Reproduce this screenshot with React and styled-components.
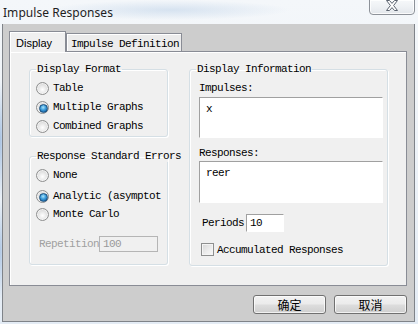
import React from 'react'
import styled, { createGlobalStyle } from 'styled-components'

const GlobalStyle = createGlobalStyle`
  html, body {
    margin: 0;
    padding: 0;
    background: #e9eff6;
  }
  * { box-sizing: border-box; }
`;

const MONO = `"Liberation Mono", "Courier New", monospace`;

const Window = styled.div`
  width: 418px;
  height: 324px;
  display: flex;
  flex-direction: column;
  overflow: hidden;
  background:
    radial-gradient(ellipse 120px 10px at 170px 10px, rgba(190, 210, 232, 0.55), transparent),
    radial-gradient(ellipse 6px 60px at 0 140px, rgba(120, 160, 210, 0.6), transparent),
    radial-gradient(ellipse 6px 50px at 0 250px, rgba(120, 160, 210, 0.5), transparent),
    linear-gradient(180deg, #f4f7fa 0%, #eef3f8 40%, #e4ecf5 100%);
`;

const TitleBar = styled.div`
  height: 24px;
  flex: none;
  display: flex;
  justify-content: space-between;
  align-items: flex-start;
`;

const Title = styled.div`
  padding: 5px 0 0 3px;
  font-family: "Noto Sans", "Open Sans", sans-serif;
  font-size: 12px;
  line-height: 15px;
  color: #1e1e1e;
  letter-spacing: 0.05px;
`;

const CloseButton = styled.div`
  width: 46px;
  height: 16px;
  margin: -1px 3px 0 0;
  border: 1px solid #8d9299;
  border-radius: 0 0 4px 4px;
  background: linear-gradient(180deg, #f6f8fa 0%, #eef1f4 50%, #e2e6eb 100%);
  box-shadow: inset 0 0 0 1px rgba(255, 255, 255, 0.8);
  display: flex;
  justify-content: center;
  align-items: flex-start;
`;

const Client = styled.div`
  flex: 1;
  margin: 0 3px 2px 2px;
  border: 1px solid #7f8389;
  border-top: none;
  background: #cdcdcd;
  padding: 7px 7px 0 6px;
  display: flex;
  flex-direction: column;
`;

const TabStrip = styled.div`
  display: flex;
  align-items: flex-end;
  height: 20px;
`;

const Tab = styled.div`
  position: relative;
  z-index: ${(p) => (p.$active ? 2 : 1)};
  width: ${(p) => p.$width}px;
  height: ${(p) => (p.$active ? 21 : 18)}px;
  margin-bottom: ${(p) => (p.$active ? -1 : 0)}px;
  padding: ${(p) => (p.$active ? '3px 0 0 6px' : '2px 0 0 4px')};
  border: 1px solid #898c95;
  border-bottom: none;
  box-shadow: inset 1px 1px 0 #fff;
  background: ${(p) => (p.$active ? '#f0f0f0' : '#ececec')};
  font-family: ${(p) => (p.$active ? `"Liberation Sans", Arial, sans-serif` : MONO)};
  font-size: 11px;
  letter-spacing: ${(p) => (p.$active ? '0' : '-0.6px')};
  line-height: 16px;
  color: #000;
  white-space: nowrap;
`;

const Panel = styled.div`
  height: 235px;
  border: 1px solid #898c95;
  box-shadow: inset 1px 1px 0 #fff;
  background: #f0f0f0;
  display: flex;
  align-items: flex-start;
  gap: 21px;
  padding: 11px 0 0 19px;
  font-family: ${MONO};
  font-size: 11px;
  letter-spacing: -0.6px;
  color: #000;
`;

const Column = styled.div`
  display: flex;
  flex-direction: column;
  gap: 13px;
  width: ${(p) => p.$width}px;
`;

const Group = styled.fieldset`
  margin: 0;
  min-width: 0;
  width: ${(p) => p.$width}px;
  padding: ${(p) => p.$padding};
  border: 1px solid #d5dfe5;
  border-radius: 3px;
  box-shadow: inset 1px 1px 0 #fff, 1px 1px 0 #fff;
  display: flex;
  flex-direction: column;
  align-items: flex-start;
`;

const Legend = styled.legend`
  padding: 0 1px;
  line-height: 12px;
  height: 12px;
  white-space: nowrap;
`;

const RadioRow = styled.div`
  display: flex;
  align-items: center;
  gap: 4px;
  height: 18px;
  margin-top: ${(p) => p.$mt || 0}px;
  white-space: nowrap;
`;

const Radio = styled.span`
  position: relative;
  flex: none;
  width: 13px;
  height: 13px;
  border-radius: 50%;
  border: 1px solid #8e8f8f;
  background: radial-gradient(circle at 50% 60%, #ffffff 0%, #eaeaea 40%, #c9c9c9 100%);
  box-shadow: inset 0 0 0 1px rgba(255, 255, 255, 0.6);

  &::after {
    content: '';
    display: ${(p) => (p.$checked ? 'block' : 'none')};
    position: absolute;
    left: 2px;
    top: 2px;
    width: 7px;
    height: 7px;
    border-radius: 50%;
    border: 1px solid #1a4f7d;
    background: radial-gradient(circle at 45% 35%, #a8e4fb 0%, #3a9ad9 45%, #0d4f8f 100%);
  }
`;

const Text = styled.span`
  line-height: 12px;
  color: ${(p) => (p.$muted ? '#a0a0a0' : '#000')};
`;

const InlineRow = styled.div`
  display: flex;
  align-items: center;
  margin-top: ${(p) => p.$mt || 0}px;
  margin-left: ${(p) => p.$ml || 0}px;
  gap: ${(p) => p.$gap || 0}px;
  white-space: nowrap;
`;

const SmallInput = styled.div`
  width: ${(p) => p.$width}px;
  height: ${(p) => p.$height}px;
  padding: 0 3px;
  line-height: ${(p) => p.$height - 2}px;
  border: 1px solid ${(p) => (p.$disabled ? '#b5b5b5' : '#fff')};
  border-top-color: ${(p) => (p.$disabled ? '#b5b5b5' : '#a0a0a0')};
  border-left-color: ${(p) => (p.$disabled ? '#b5b5b5' : '#a0a0a0')};
  background: ${(p) => (p.$disabled ? '#f0f0f0' : '#fff')};
  color: ${(p) => (p.$disabled ? '#9a9a9a' : '#000')};
`;

const FieldLabel = styled.div`
  margin: ${(p) => p.$mt || 0}px 0 0 3px;
  line-height: 12px;
`;

const TextBox = styled.div`
  width: 184px;
  height: ${(p) => p.$height}px;
  margin: ${(p) => p.$mt || 0}px 0 0 3px;
  padding: 5px 6px;
  line-height: 12px;
  background: #fff;
  border: 1px solid #fff;
  border-top-color: #a0a0a0;
  border-left-color: #a0a0a0;
`;

const CheckBox = styled.span`
  flex: none;
  width: 13px;
  height: 13px;
  border: 1px solid #8e8f8f;
  background: linear-gradient(135deg, #d6d6d6 0%, #eeeeee 60%, #f8f8f8 100%);
  box-shadow: inset 0 0 0 1px #f4f4f4;
`;

const Footer = styled.div`
  display: flex;
  justify-content: flex-end;
  gap: 8px;
  padding-top: 9px;
`;

const Button = styled.button`
  width: 73px;
  height: 19px;
  padding: 0;
  border: 1px solid #707070;
  border-radius: 3px;
  background: linear-gradient(180deg, #f2f2f2 0%, #ebebeb 48%, #dddddd 52%, #cfcfcf 100%);
  box-shadow: inset 0 0 0 1px rgba(255, 255, 255, 0.7);
  font-family: "Noto Sans CJK SC", "Noto Sans", sans-serif;
  font-size: 12px;
  line-height: 16px;
  color: #000;
`;

const CloseIcon = () => (
  <svg width="14" height="12" viewBox="0 0 14 12">
    <path
      d="M1.5 0.5 H4.5 L7 3.4 L9.5 0.5 H12.5 L8.6 5.5 L12.5 10.5 H9.5 L7 7.6 L4.5 10.5 H1.5 L5.4 5.5 Z"
      fill="#ffffff"
      stroke="#5c6470"
      strokeWidth="1"
      strokeLinejoin="round"
    />
  </svg>
);

export default function App() {
  return (
    <>
      <GlobalStyle />
      <Window>
        <TitleBar>
          <Title>Impulse Responses</Title>
          <CloseButton>
            <CloseIcon />
          </CloseButton>
        </TitleBar>
        <Client>
          <TabStrip>
            <Tab $active $width={57}>Display</Tab>
            <Tab $width={116}>Impulse Definition</Tab>
          </TabStrip>
          <Panel>
            <Column $width={139}>
              <Group $width={139} $padding="4px 0 1px 6px">
                <Legend>Display Format</Legend>
                <RadioRow>
                  <Radio />
                  <Text>Table</Text>
                </RadioRow>
                <RadioRow $mt={1}>
                  <Radio $checked />
                  <Text>Multiple Graphs</Text>
                </RadioRow>
                <RadioRow $mt={1}>
                  <Radio />
                  <Text>Combined Graphs</Text>
                </RadioRow>
              </Group>
              <Group $width={139} $padding="4px 0 12px 6px">
                <Legend>Response Standard Errors</Legend>
                <RadioRow>
                  <Radio />
                  <Text>None</Text>
                </RadioRow>
                <RadioRow $mt={3}>
                  <Radio $checked />
                  <Text>Analytic (asymptot</Text>
                </RadioRow>
                <RadioRow>
                  <Radio />
                  <Text>Monte Carlo</Text>
                </RadioRow>
                <InlineRow $mt={13} $ml={3}>
                  <Text $muted>Repetition</Text>
                  <SmallInput $disabled $width={59} $height={16}>100</SmallInput>
                </InlineRow>
              </Group>
            </Column>
            <Group $width={199} $padding="7px 0 9px 6px">
              <Legend>Display Information</Legend>
              <FieldLabel>Impulses:</FieldLabel>
              <TextBox $mt={3} $height={41}>x</TextBox>
              <FieldLabel $mt={9}>Responses:</FieldLabel>
              <TextBox $mt={2} $height={42}>reer</TextBox>
              <InlineRow $mt={11} $ml={6} $gap={2}>
                <Text>Periods</Text>
                <SmallInput $width={38} $height={18}>10</SmallInput>
              </InlineRow>
              <InlineRow $mt={11} $ml={5} $gap={3}>
                <CheckBox />
                <Text>Accumulated Responses</Text>
              </InlineRow>
            </Group>
          </Panel>
          <Footer>
            <Button>确定</Button>
            <Button>取消</Button>
          </Footer>
        </Client>
      </Window>
    </>
  );
}
